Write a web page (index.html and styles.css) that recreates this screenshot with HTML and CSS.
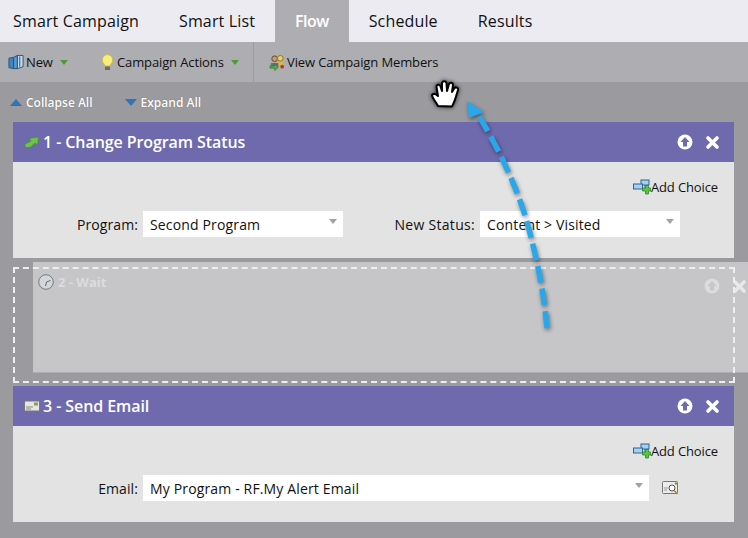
FILE: index.html
```html
<!DOCTYPE html>
<html lang="en">
<head>
  <meta charset="UTF-8"/>
  <title>Flow - Smart Campaign</title>
  <link rel="stylesheet" href="styles.css">
</head>
<body>

  <nav class="tabs">
    <a class="tab first">Smart Campaign</a>
    <a class="tab">Smart List</a>
    <a class="tab active">Flow</a>
    <a class="tab">Schedule</a>
    <a class="tab">Results</a>
  </nav>

  <div class="toolbar">
    <span class="tool tool-new">
      <svg class="ico" width="16" height="17" viewBox="0 0 17 17"><path d="M1 4l5-1v12l-5-1z" fill="#3f86c4" stroke="#24507c"/><path d="M6 3l4-2v14l-4 0z" fill="#5b9bd0" stroke="#24507c"/><path d="M10 1h6v12l-6 2z" fill="#c9dcec" stroke="#24507c"/><path d="M12.500 2v11" stroke="#24507c"/></svg>
      <span>New</span>
      <i class="drop"></i>
    </span>
    <span class="tool tool-actions">
      <svg class="ico" width="15" height="18" viewBox="0 0 15 17"><path d="M7.500 1a5.500 5.500 0 0 0-3 10v1.500h6V11a5.500 5.500 0 0 0-3-10z" fill="#f8ee7c" stroke="#c9b84a"/><rect x="5" y="13" width="5" height="3.500" fill="#6d6d6d"/></svg>
      <span>Campaign Actions</span>
      <i class="drop"></i>
    </span>
    <span class="tool tool-members">
      <svg class="ico" width="16" height="17" viewBox="0 0 17 17"><circle cx="6" cy="4.500" r="3" fill="#c99a6a" stroke="#5b4630"/><circle cx="12" cy="4" r="3" fill="#e8cf6a" stroke="#8a7430"/><path d="M9 8h6v5H9z" fill="#d8b94e"/><path d="M2 13V9h8v4z" fill="#5f6f86"/><path d="M1 12h5V9.500l4 4-4 3.500v-2.500H1z" fill="#55a845" stroke="#2f6d27" stroke-width=".6"/><circle cx="14" cy="13" r="2" fill="#a83a3a"/></svg>
      <span>View Campaign Members</span>
    </span>
  </div>

  <main class="flow">
    <div class="expanders">
      <span class="expander"><i class="tri-up"></i>Collapse All</span>
      <span class="expander"><i class="tri-down"></i>Expand All</span>
    </div>

    <section class="card">
      <header class="card-head">
        <svg class="head-ico" width="15" height="12" viewBox="0 0 15 12"><path d="M1 11.500V8l6-3-2-2.500L14.500 1 13.500 9 11 7l-5 4.500z" fill="#6cc644" stroke="#3f8a2a" stroke-width=".6"/></svg>
        <h3>1 - Change Program Status</h3>
        <span class="head-btns">
          <svg width="16" height="16" viewBox="0 0 16 16"><use href="#ico-up"/></svg>
          <svg width="15" height="15" viewBox="0 0 15 15"><use href="#ico-x"/></svg>
        </span>
      </header>
      <div class="card-body">
        <a class="add-choice"><svg width="18" height="16" viewBox="0 0 18 16"><use href="#ico-choice"/></svg>Add Choice</a>
        <div class="fields">
          <label class="lbl">Program:</label>
          <div class="select"><span>Second Program</span><i class="caret"></i></div>
          <label class="lbl lbl-status">New Status:</label>
          <div class="select"><span>Content &gt; Visited</span><i class="caret"></i></div>
        </div>
      </div>
    </section>

    <div class="drop-slot"></div>

    <section class="card">
      <header class="card-head">
        <svg class="head-ico" width="16" height="12" viewBox="0 0 16 12"><rect x=".5" y="1" width="15" height="10" fill="#e6e6de" stroke="#777"/><rect x="10" y="2.500" width="4" height="3" fill="#8a9a6a"/><path d="M2 7h7M2 9h5" stroke="#888"/></svg>
        <h3 class="tight">3 - Send Email</h3>
        <span class="head-btns">
          <svg width="16" height="16" viewBox="0 0 16 16"><use href="#ico-up"/></svg>
          <svg width="15" height="15" viewBox="0 0 15 15"><use href="#ico-x"/></svg>
        </span>
      </header>
      <div class="card-body">
        <a class="add-choice"><svg width="18" height="16" viewBox="0 0 18 16"><use href="#ico-choice"/></svg>Add Choice</a>
        <div class="fields">
          <label class="lbl">Email:</label>
          <div class="select select-wide"><span>My Program - RF.My Alert Email</span><i class="caret"></i></div>
          <svg class="picker" width="17" height="14" viewBox="0 0 17 14"><rect x=".5" y=".5" width="15" height="12" rx="1" fill="#ececec" stroke="#777"/><path d="M2 7h4M2 9h3" stroke="#999"/><circle cx="10" cy="7" r="3" fill="#fff" stroke="#555"/><path d="M12 9.500l3.500 3.500" stroke="#b5852e" stroke-width="1.600"/><circle cx="14" cy="2.500" r="1.300" fill="#8a9a3a"/></svg>
        </div>
      </div>
    </section>

    <!-- the step being dragged -->
    <div class="ghost">
      <svg class="ghost-clock" width="16" height="16" viewBox="0 0 16 16"><circle cx="8" cy="8" r="7.300" fill="#d3d7dc" stroke="#77797d"/><path d="M8.500 8l4-1.500M8.500 8l-1 4" stroke="#66686c"/></svg>
      <span class="ghost-title">2 - Wait</span>
      <svg class="ghost-up" width="16" height="16" viewBox="0 0 16 16"><circle cx="8" cy="8" r="7.500" fill="#dcdcde"/><path d="M8 3l4.500 5H10v4.500H6V8H3.500z" fill="#c6c6c8"/></svg>
      <svg class="ghost-x" width="15" height="15" viewBox="0 0 15 15"><use href="#ico-x"/></svg>
    </div>
    <div class="drop-outline"></div>
  </main>

  <svg class="arrow" width="748" height="538" viewBox="0 0 748 538">
    <path d="M547 328C544 295 538 262 527 222 516 184 498 148 479 116" fill="none" stroke="#2aa7ea" stroke-width="5.500" stroke-dasharray="17 6"/>
    <path d="M467 101l17 11-15 6z" fill="#2aa7ea"/>
  </svg>

  <svg class="hand" width="28" height="28" viewBox="0 0 28 28">
    <path d="M7 26C5 22 1 18 1 15 2 13 5 14 7 16L5.500 7C5.500 4 9 4 9.500 6.500L11 11 11 3C11.500 .8 15 .8 15.500 3L16 11 18 4C19 2 22 2.500 22 5L21 12 23.500 8C25 6.500 27.500 8 27 10L24.500 18C23.500 22 22 24 21 26.500z" fill="#fff" stroke="#000" stroke-width="2" stroke-linejoin="round"/>
  </svg>

  <svg class="defs" width="0" height="0">
    <defs>
      <g id="ico-up"><circle cx="8" cy="8" r="7.500" fill="#fff"/><path d="M8 3l4.500 5H10v4.500H6V8H3.500z" fill="#6f6aae"/></g>
      <g id="ico-x"><path d="M3 3l9 9M12 3l-9 9" stroke="#fff" stroke-width="3.600" stroke-linecap="round"/></g>
      <g id="ico-choice">
        <rect x="8" y="1" width="8" height="5" fill="#a9cfee" stroke="#2a6796"/>
        <rect x=".5" y="5" width="9" height="5" fill="#a9cfee" stroke="#2a6796"/>
        <path d="M12 6v3" stroke="#2a6796"/>
        <path d="M9.500 9h3V6.500h3V9h2.500v3h-2.500v3h-3v-3h-3z" fill="#5cc24a" stroke="#237a1f" stroke-width=".7"/>
      </g>
    </defs>
  </svg>

</body>
</html>
```

FILE: styles.css
```css
body {
  margin: 0;
  width: 748px;
  height: 538px;
  overflow: hidden;
  position: relative;
  font-family: 'Open Sans', sans-serif;
  background: #9b9a9f;
  color: #111;
}

svg {
  flex-shrink: 0;
}

.tabs {
  display: flex;
  height: 42px;
  background: #ecebf1;
}
.tab {
  padding: 0 20px;
  font-size: 16px;
  letter-spacing: .15px;
  line-height: 42px;
  color: #111;
}
.tab.first {
  padding-left: 13px;
}
.tab.active {
  background: #aeadb2;
  color: #fff;
  font-weight: 600;
  letter-spacing: -.55px;
}

.toolbar {
  display: flex;
  height: 40px;
  align-items: center;
  background: #aeadb2;
  font-size: 13px;
  letter-spacing: -.12px;
}
.tool {
  display: flex;
  align-items: center;
  height: 100%;
  box-sizing: border-box;
}
.tool .ico {
  margin-right: 2px;
}
.tool-new {
  padding-left: 8px;
  width: 100px;
}
.tool-actions {
  width: 154px;
  border-right: 1px solid #9b9a9f;
}
.tool-members {
  padding-left: 15px;
}
.drop {
  margin-left: 7px;
  width: 0;
  height: 0;
  border: 4px solid transparent;
  border-top: 5px solid #4e9a3a;
  border-bottom: 0;
}

.flow {
  padding: 0 14px 0 13px;
}

.expanders {
  display: flex;
  height: 40px;
  align-items: center;
  gap: 32px;
  margin-left: -3px;
  font-size: 12px;
  font-weight: 600;
  color: #fff;
  text-shadow: 0 0 1px #666;
}
.expander {
  display: flex;
  align-items: center;
  gap: 4px;
}
.tri-up, .tri-down {
  width: 0;
  height: 0;
  border-left: 6px solid transparent;
  border-right: 6px solid transparent;
}
.tri-up {
  border-bottom: 7px solid #2f75b5;
}
.tri-down {
  border-top: 7px solid #2f75b5;
}

.card-head {
  display: flex;
  align-items: center;
  height: 40px;
  padding: 0 14px 0 11px;
  background: #6f6aae;
  color: #fff;
}
.card-head h3 {
  margin: 0 0 0 4px;
  font-size: 16px;
  font-weight: 600;
  letter-spacing: -.08px;
}
.card-head h3.tight {
  margin-left: 3px;
}
.head-btns {
  margin-left: auto;
  display: flex;
  align-items: center;
  gap: 12px;
}
.card-body {
  height: 96px;
  background: #e3e3e3;
  box-sizing: border-box;
  padding: 15px 16px 0 0;
}
.add-choice {
  display: flex;
  justify-content: flex-end;
  align-items: center;
  height: 20px;
  font-size: 13px;
  letter-spacing: -.12px;
}
.fields {
  display: flex;
  align-items: center;
  margin-top: 14px;
}
.lbl {
  width: 125px;
  margin-right: 5px;
  text-align: right;
  font-size: 14px;
  letter-spacing: .1px;
}
.lbl-status {
  width: 132px;
  letter-spacing: .3px;
}
.select {
  display: flex;
  align-items: center;
  justify-content: space-between;
  width: 200px;
  height: 26px;
  box-sizing: border-box;
  padding: 0 6px 0 7px;
  background: #fff;
  font-size: 14px;
  letter-spacing: .15px;
}
.select-wide {
  width: 506px;
}
.caret {
  width: 0;
  height: 0;
  border: 4px solid transparent;
  border-top: 5px solid #a3a3a3;
  border-bottom: 0;
  margin-top: -5px;
}
.picker {
  margin-left: 13px;
}

.drop-slot {
  height: 128px;
}
.ghost {
  position: absolute;
  left: 33px;
  top: 262px;
  width: 715px;
  height: 110px;
  background: #c6c6c8;
  border-bottom: 1px solid #aeadb2;
}
.ghost-clock {
  position: absolute;
  left: 5px;
  top: 12px;
}
.ghost-title {
  position: absolute;
  left: 25px;
  top: 11px;
  font-size: 13px;
  font-weight: 700;
  color: #dcdcde;
}
.ghost-up {
  position: absolute;
  left: 671px;
  top: 16px;
}
.ghost-x {
  position: absolute;
  left: 699px;
  top: 17px;
  opacity: .6;
}
.drop-outline {
  position: absolute;
  left: 13px;
  top: 267px;
  width: 718px;
  height: 112px;
  border: 2px dashed #eee;
}

.arrow {
  position: absolute;
  left: 0;
  top: 0;
  filter: drop-shadow(1px 2px 2px rgba(0,0,0,.45));
}
.hand {
  position: absolute;
  left: 431px;
  top: 80px;
  filter: drop-shadow(0 0 2px rgba(0,0,0,.8));
}
.defs {
  position: absolute;
}
```
